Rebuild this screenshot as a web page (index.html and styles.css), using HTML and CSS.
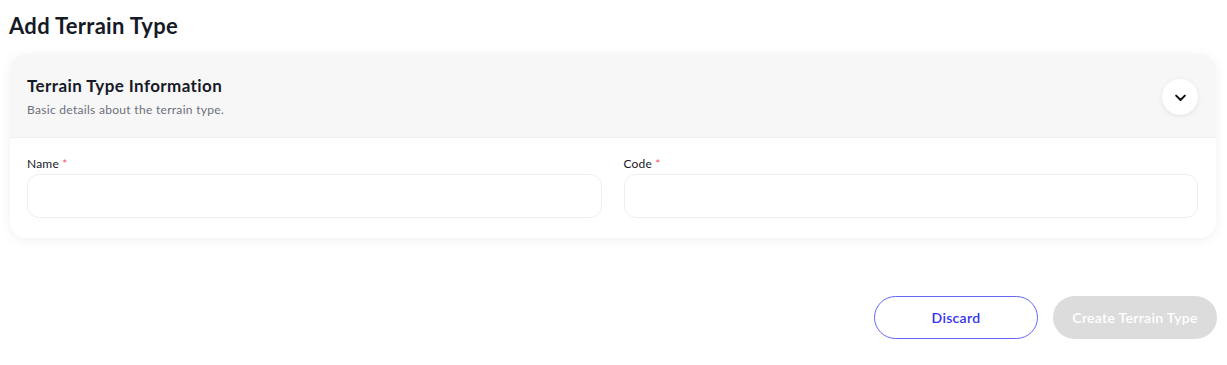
FILE: index.html
```html
<!DOCTYPE html>
<html lang="en">
<head>
  <meta charset="UTF-8">
  <meta name="viewport" content="width=device-width, initial-scale=1.0">
  <title>Add Terrain Type</title>
  <link rel="stylesheet" href="styles.css">
</head>
<body>
  <div class="page">
    <h1>Add Terrain Type</h1>

    <div class="card">
      <div class="card-header">
        <div>
          <h2>Terrain Type Information</h2>
          <p>Basic details about the terrain type.</p>
        </div>
        <button class="toggle" type="button">
          <svg width="15" height="15" viewBox="0 0 24 24" fill="none" stroke="#111" stroke-width="3.2" stroke-linecap="round" stroke-linejoin="round">
            <path d="M5 9l7 7 7-7"/>
          </svg>
        </button>
      </div>
      <div class="card-body">
        <div class="field">
          <label>Name <span class="req">*</span></label>
          <input type="text">
        </div>
        <div class="field">
          <label>Code <span class="req">*</span></label>
          <input type="text">
        </div>
      </div>
    </div>

    <div class="actions">
      <button class="btn btn-outline" type="button">Discard</button>
      <button class="btn btn-disabled" type="button" disabled>Create Terrain Type</button>
    </div>
  </div>
</body>
</html>
```

FILE: styles.css
```css
* {
  box-sizing: border-box;
}
body {
  margin: 0;
  font-family: Lato, "Noto Sans", sans-serif;
  background: #fff;
  color: #161a27;
}
.page {
  padding: 12px 10px 0 10px;
}
h1 {
  margin: 0 0 0 -1px;
  font-size: 22px;
  font-weight: 700;
  line-height: 28px;
  letter-spacing: 0.3px;
}
.card {
  margin-top: 14px;
  width: 1206px;
  border-radius: 16px;
  background: #fff;
  box-shadow: 0 2px 12px rgba(0, 0, 0, 0.06);
  overflow: hidden;
}
.card-header {
  display: flex;
  align-items: center;
  justify-content: space-between;
  background: #f7f7f7;
  border-bottom: 1px solid #efefef;
  padding: 20px 18px 19px 17px;
  height: 84px;
}
h2 {
  margin: 0;
  font-size: 17px;
  font-weight: 700;
  line-height: 22px;
  letter-spacing: 0.4px;
}
.card-header p {
  margin: 5px 0 0;
  font-size: 12px;
  letter-spacing: 0.3px;
  color: #6b6f7b;
}
.toggle {
  width: 36px;
  height: 36px;
  border: none;
  border-radius: 50%;
  background: #fff;
  box-shadow: 0 1px 4px rgba(0, 0, 0, 0.1);
  display: flex;
  align-items: center;
  justify-content: center;
  padding: 0;
  margin-top: 2px;
}
.card-body {
  display: grid;
  grid-template-columns: 1fr 1fr;
  gap: 22px;
  padding: 18px 18px 20px 17px;
}
.field label {
  display: block;
  font-size: 12px;
  line-height: 15px;
  margin-bottom: 3px;
  letter-spacing: 0.2px;
  color: #161a27;
}
.req {
  color: #f0566a;
}
.field input {
  display: block;
  width: 100%;
  height: 44px;
  border: 1px solid #eeeeee;
  border-radius: 12px;
  background: #fff;
  outline: none;
}
.actions {
  display: flex;
  justify-content: flex-end;
  gap: 15px;
  margin-top: 58px;
}
.btn {
  width: 164px;
  height: 43px;
  border-radius: 22px;
  font-family: inherit;
  font-size: 14px;
  font-weight: 600;
  letter-spacing: 0.3px;
}
.btn-outline {
  background: #fff;
  border: 1px solid #6565f7;
  color: #3333f2;
}
.btn-disabled {
  background: #dcdcdc;
  border: none;
  color: #fff;
}
```
